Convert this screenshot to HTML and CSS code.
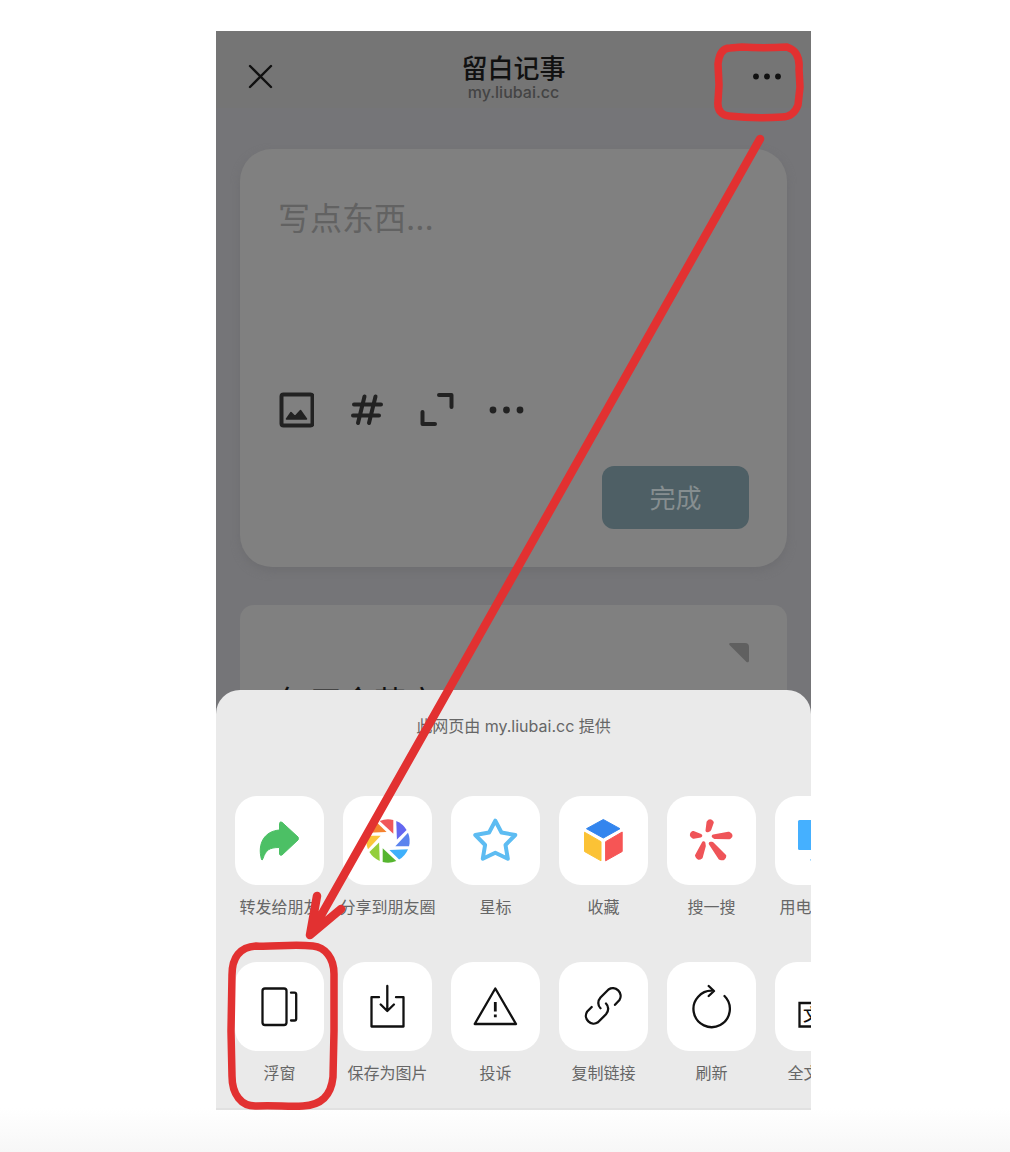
FILE: index.html
```html
<!DOCTYPE html>
<html lang="zh-CN">
<head>
<meta charset="utf-8">
<meta name="viewport" content="width=device-width, initial-scale=1">
<title>留白记事</title>
<link rel="stylesheet" href="styles.css">
</head>
<body>
<main class="phone">
  <div class="page">
    <header class="topbar">
      <button class="icon-button" type="button" aria-label="关闭">
        <svg width="28" height="28" viewBox="0 0 28 28"><path d="M4 3 25 24M25 3 4 24" fill="none" stroke="#111" stroke-width="2.4" stroke-linecap="round"/></svg>
      </button>
      <div class="heading">
        <h1 class="title">留白记事</h1>
        <p class="domain">my.liubai.cc</p>
      </div>
      <button class="icon-button" type="button" aria-label="更多">
        <svg width="28" height="28" viewBox="0 0 28 28" fill="#111"><circle cx="3" cy="13.500" r="2.9"/><circle cx="14" cy="13.500" r="2.9"/><circle cx="25" cy="13.500" r="2.9"/></svg>
      </button>
    </header>

    <div class="content">
      <form class="card editor">
        <textarea class="note" aria-label="写点东西" placeholder="写点东西..."></textarea>
        <div class="tools">
          <button class="tool" type="button" aria-label="图片">
            <svg width="36" height="36" viewBox="0 0 36 36"><rect x="3.500" y="2.500" width="31" height="31" rx="2" fill="none" stroke="#222" stroke-width="4"/><path d="M8.500 27 13 20.500 17 24.500 22.500 18.500 28.500 27Z" fill="#222" stroke="#222" stroke-width="1.500" stroke-linejoin="round"/></svg>
          </button>
          <button class="tool" type="button" aria-label="标签">
            <svg width="36" height="36" viewBox="0 0 36 36"><path d="M16.500 4.500 10 31M27.500 4.500 21 31M6 12.500H33M5 23.500H31" fill="none" stroke="#222" stroke-width="4" stroke-linecap="round"/></svg>
          </button>
          <button class="tool" type="button" aria-label="全屏">
            <svg width="36" height="36" viewBox="0 0 36 36"><path d="M21 3H33.500V15M4.500 20V32H17" fill="none" stroke="#222" stroke-width="4" stroke-linecap="round" stroke-linejoin="round"/></svg>
          </button>
          <button class="tool" type="button" aria-label="更多工具">
            <svg width="36" height="36" viewBox="0 0 36 36" fill="#222"><circle cx="5" cy="18" r="3.400"/><circle cx="18.500" cy="18" r="3.400"/><circle cx="32" cy="18" r="3.400"/></svg>
          </button>
        </div>
        <button class="submit" type="button">完成</button>
      </form>

      <article class="card entry">
        <svg class="fold" width="20" height="20" viewBox="0 0 20 20" aria-hidden="true"><path d="M1 0H16Q20 0 20 4V18Q19.500 20 17.500 19L.5 2Q-.3.500 1 0Z" fill="#606060"/></svg>
        <p class="entry-text">每天食药方</p>
      </article>
    </div>
  </div>

  <section class="sheet" aria-label="网页菜单">
    <p class="provider">此网页由 my.liubai.cc 提供</p>
    <div class="row">
      <button class="action" type="button">
        <svg class="tile" viewBox="0 0 89 89"><path d="M26.500 63.500C22 47 30 35 44.500 34V27.500Q45 25 47 26.300L63 41Q64 42.500 63 44L47 59Q45 60 44.500 58V51.500C34 51.500 31 54 28 62.500Q27 65 26.500 63.500Z" fill="#4cc065" stroke="#4cc065" stroke-linejoin="round"/></svg>
        <span class="label">转发给朋友</span>
      </button>
      <button class="action" type="button">
        <svg class="tile" viewBox="0 0 89 89">
          <defs><path id="blade" d="M-8.300-20A21.700 21.700 0 0 1 5.300-21V-7.300Z"/></defs>
          <g transform="translate(45 45)">
            <use href="#blade" fill="#f0575a"/>
            <use href="#blade" fill="#6467f0" transform="rotate(45)"/>
            <use href="#blade" fill="#5b84ee" transform="rotate(90)"/>
            <use href="#blade" fill="#3fb0fb" transform="rotate(135)"/>
            <use href="#blade" fill="#56b52f" transform="rotate(180)"/>
            <use href="#blade" fill="#94ce3b" transform="rotate(225)"/>
            <use href="#blade" fill="#fac63b" transform="rotate(270)"/>
            <use href="#blade" fill="#f5822f" transform="rotate(315)"/>
          </g>
        </svg>
        <span class="label">分享到朋友圈</span>
      </button>
      <button class="action" type="button">
        <svg class="tile" viewBox="0 0 89 89"><path d="M44.300 24.700 50.500 36.500 64.300 39 54.500 49 56.800 62.700 44.300 56.700 31.800 62.700 34.100 49 24.300 39 38.100 36.500Z" fill="none" stroke="#5dbcf2" stroke-width="4" stroke-linejoin="round"/></svg>
        <span class="label">星标</span>
      </button>
      <button class="action" type="button">
        <svg class="tile" viewBox="0 0 89 89" stroke-width="1" stroke-linejoin="round"><path d="M44.300 23.500 61 32.700 44.300 42 27.500 32.700Z" fill="#3385ee" stroke="#3385ee"/><path d="M25.500 36.200 42 45.700V64.800L25.500 55.500Z" fill="#fbc235" stroke="#fbc235"/><path d="M46.600 45.700 63.200 36V55.500L46.600 64.800Z" fill="#f65555" stroke="#f65555"/></svg>
        <span class="label">收藏</span>
      </button>
      <button class="action" type="button">
        <svg class="tile" viewBox="0 0 89 89" fill="#ef5458" stroke="#ef5458" stroke-width="3.600" stroke-linejoin="round"><path d="M40.300 34.500 41.300 26.500Q43 23.500 45 26.500L42.500 33.500Z"/><path d="M33.500 39.700 26.500 41Q23 39 26 36.800Z"/><path d="M46.500 40.300 61.500 37.500Q65.500 39.300 62.500 41.400L48 41.300Z"/><path d="M36.600 47 29.800 59.500Q31 63.500 34 61L37 50Z"/><path d="M43.500 47.500 53 62Q57.500 63.500 57.500 60L45 47.500Z"/></svg>
        <span class="label">搜一搜</span>
      </button>
      <button class="action" type="button">
        <svg class="tile" viewBox="0 0 89 89" fill="#45b0ff"><rect x="23" y="24" width="43" height="30" rx="1.500"/><path d="M35 63.500Q44.500 60 54 63.500V65H36Z"/></svg>
        <span class="label">用电脑打开</span>
      </button>
    </div>
    <div class="row">
      <button class="action" type="button">
        <svg class="tile line" viewBox="0 0 89 89"><rect x="27.500" y="26.500" width="24" height="36.500" rx="2.500"/><path d="M56 30.700H59.500Q61.200 30.700 61.200 32.500V56.700Q61.200 58.500 59.500 58.500H56"/></svg>
        <span class="label">浮窗</span>
      </button>
      <button class="action" type="button">
        <svg class="tile line" viewBox="0 0 89 89"><path d="M36 35.200H28.500V64.500H60.500V35.200H53M44.300 24V49M37.700 42.500 44.300 49 50.900 42.500"/></svg>
        <span class="label">保存为图片</span>
      </button>
      <button class="action" type="button">
        <svg class="tile line" viewBox="0 0 89 89"><path d="M44.300 26.500 65 62H23.700Z"/><path d="M44.300 40V49.500M44.300 52.500V55.200" stroke-width="2.800" stroke-linecap="butt"/></svg>
        <span class="label">投诉</span>
      </button>
      <button class="action" type="button">
        <svg class="tile line" viewBox="0 0 89 89"><path d="M56 42.800 60.500 38A7.800 7.800 0 0 0 49.500 27.500L41.500 35.500C38.500 39 38.700 43.500 41.500 46.300M32.700 45 28 49.800A7.800 7.800 0 0 0 39 60.300L47 52.300C50 48.800 49.800 44.300 47 41.500"/></svg>
        <span class="label">复制链接</span>
      </button>
      <button class="action" type="button">
        <svg class="tile line" viewBox="0 0 89 89"><path d="M57.500 34A18.200 18.200 0 1 1 46.500 28.800M41.700 24 47 29 41.700 34"/></svg>
        <span class="label">刷新</span>
      </button>
      <button class="action" type="button">
        <svg class="tile" viewBox="0 0 89 89"><path d="M56 41H24.500V64.500H62V50" fill="none" stroke="#111" stroke-width="2.300"/><text class="translate-mark" x="28" y="59">文</text></svg>
        <span class="label">全文翻译</span>
      </button>
    </div>
  </section>

  <svg class="marks" viewBox="0 0 595 1079" aria-hidden="true">
    <path d="M526 16C539 17 555 17 571 16C580 19 584 26 583 38L584 56L582 74C579 82 573 86 566 86C550 87 532 87 513 85C505 84 501 79 502 70L503 54L502 33C503 23 507 17 514 17Z"/>
    <path d="M544 108 94 904M101 865 94 904 125 878" stroke-width="8.500"/>
    <path d="M40 915C57 916 75 913 97 915C109 916 118 927 118 943L118 1000L117 1046C115 1065 105 1074 87 1075C73 1076 58 1074 41 1075C25 1076 16 1063 16 1045L15 1000L16 944C16 926 24 916 40 915Z"/>
  </svg>
</main>
</body>
</html>
```
FILE: styles.css
```css
* {
  box-sizing: border-box;
}

body {
  min-height: 100vh;
  margin: 0;
  padding: 31px 199px 42px 216px;
  background: linear-gradient(to top, #f7f7f7, #fff 44px);
  font-family: Inter, "Noto Sans CJK SC", sans-serif;
}

h1,
p {
  margin: 0;
}

button {
  padding: 0;
  border: 0;
  background: none;
  color: inherit;
  font: inherit;
}

svg {
  display: block;
}

.phone {
  position: relative;
}

.page {
  background: #757578;
}

.topbar {
  display: flex;
  align-items: center;
  justify-content: space-between;
  height: 77px;
  padding: 14px 30px 0;
  background: #757575;
}

.heading {
  text-align: center;
}

.title {
  color: #111;
  font-size: 26px;
  font-weight: 500;
  line-height: 30px;
}

.domain {
  color: #444;
  font-size: 16px;
  font-weight: 500;
  line-height: 16px;
}

.content {
  display: flex;
  flex-direction: column;
  gap: 38px;
  padding: 41px 24px 0;
}

.card {
  display: flex;
  flex-direction: column;
  background: #808080;
}

.editor {
  padding: 46px 38px 38px;
  border-radius: 32px;
  box-shadow: 0 4px 8px #6e6e71;
}

.note {
  height: 197px;
  padding: 0;
  border: 0;
  outline: 0;
  resize: none;
  background: none;
  color: #222;
  font: inherit;
  font-size: 32px;
  line-height: 48px;
}

.note::placeholder {
  color: #626262;
}

.tools {
  display: flex;
  gap: 34px;
}

.submit {
  align-self: flex-end;
  width: 147px;
  height: 63px;
  margin-top: 38px;
  padding-bottom: 2px;
  border-radius: 12px;
  background: #4e5f65;
  color: #868e90;
  font-size: 26px;
}

.entry {
  gap: 24px;
  padding: 38px 38px 0;
  border-radius: 14px 14px 0 0;
}

.fold {
  align-self: flex-end;
}

.entry-text {
  color: #111;
  font-size: 32px;
  line-height: 32px;
}

.sheet {
  position: relative;
  display: flex;
  flex-direction: column;
  gap: 43px;
  margin-top: -29px;
  padding: 24px 0 23px;
  overflow: hidden;
  border-bottom: 2px solid #e1e1e1;
  border-radius: 24px 24px 0 0;
  background: #eaeaea;
}

.provider {
  margin-bottom: 15px;
  color: #666;
  font-size: 16px;
  line-height: 24px;
  text-align: center;
}

.row {
  display: flex;
  gap: 19px;
  padding-left: 19px;
}

.action {
  display: flex;
  flex: none;
  flex-direction: column;
  align-items: center;
  gap: 10px;
  width: 89px;
}

.tile {
  width: 89px;
  height: 89px;
  border-radius: 22px;
  background: #fff;
}

.line {
  fill: none;
  stroke: #111;
  stroke-width: 2.3px;
  stroke-linecap: round;
  stroke-linejoin: round;
}

.translate-mark {
  fill: #111;
  font-size: 17px;
  font-weight: 500;
}

.label {
  color: #666;
  font-size: 16px;
  line-height: 24px;
  white-space: nowrap;
}

.marks {
  position: absolute;
  inset: 0;
  width: 100%;
  height: 100%;
  overflow: visible;
  fill: none;
  stroke: #e23131;
  stroke-width: 7.5px;
  stroke-linecap: round;
  stroke-linejoin: round;
  pointer-events: none;
}
```
